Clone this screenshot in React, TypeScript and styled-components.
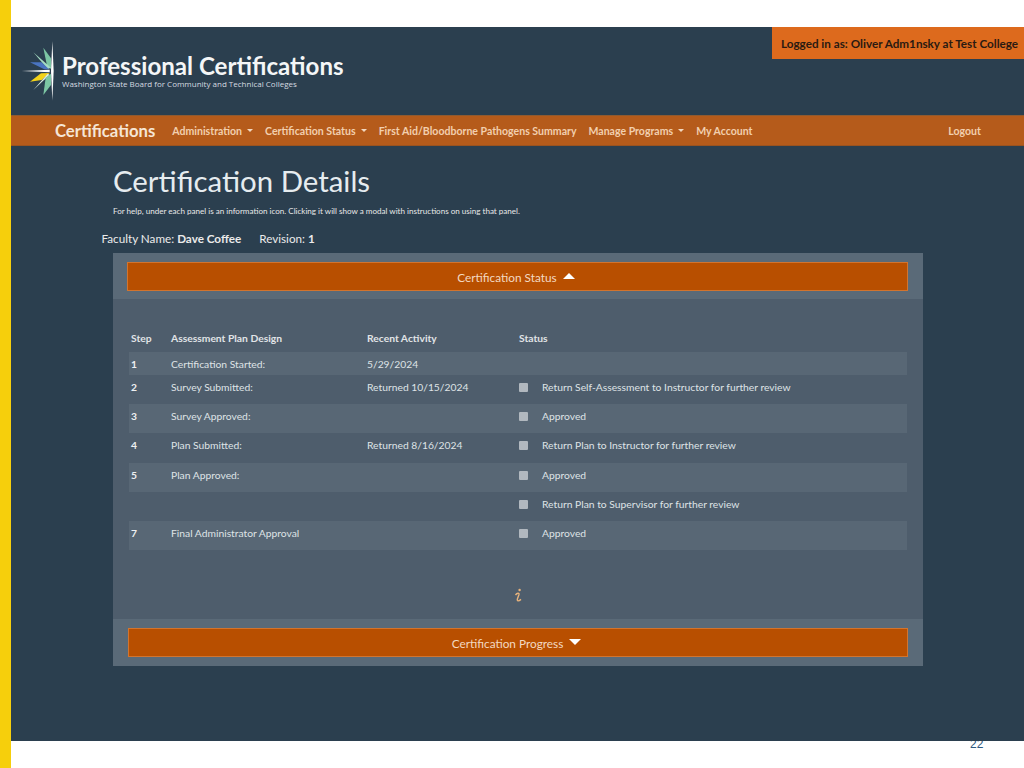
import * as React from 'react';
import styled, { createGlobalStyle } from 'styled-components';

const GlobalStyle = createGlobalStyle`
  html, body {
    margin: 0;
    padding: 0;
    background: #fff;
    font-family: Lato, "Liberation Sans", sans-serif;
  }
`;

/**
 * Styled components
 */
const Page = styled.div`
  display: flex;
  height: 768px;
  overflow: hidden;
  position: relative;
  width: 1024px;
`;

const YellowBar = styled.div`
  background: #f6cf0c;
  flex: 0 0 11px;
`;

const Slide = styled.div`
  background: #2b3f4f;
  color: #ebebeb;
  display: flex;
  flex: 1;
  flex-direction: column;
  height: 714px;
  margin-top: 27px;
  position: relative;
  z-index: 1;
`;

const PageNumber = styled.div`
  color: #2f5a80;
  font-family: "Liberation Sans", sans-serif;
  font-size: 12px;
  left: 970px;
  line-height: 14px;
  position: absolute;
  top: 737px;
`;

const LoginBadge = styled.div`
  align-items: center;
  background: #dd6a1d;
  box-sizing: border-box;
  color: #2a1a12;
  display: flex;
  font-size: 11.7px;
  font-weight: 700;
  height: 32px;
  padding-left: 9px;
  position: absolute;
  right: 0;
  top: 0;
  white-space: nowrap;
  width: 252px;
`;

const Banner = styled.header`
  align-items: center;
  display: flex;
  height: 88px;
  padding-left: 4px;
`;

const LogoMark = styled.svg`
  display: block;
  flex: 0 0 auto;
  height: 72px;
  width: 47px;
`;

const BrandText = styled.div`
  margin-top: 1px;
`;

const BrandTitle = styled.div`
  color: #f4f6f7;
  font-size: 24.1px;
  font-weight: 700;
  line-height: 24px;
  white-space: nowrap;
`;

const BrandSubtitle = styled.div`
  color: #d5dbe0;
  font-family: "Open Sans", sans-serif;
  font-size: 8px;
  line-height: 11px;
  white-space: nowrap;
`;

const NavBar = styled.nav`
  align-items: center;
  background: #b55b1b;
  border-bottom: 1px solid #9a5320;
  border-top: 1px solid #8f5a30;
  box-sizing: border-box;
  display: flex;
  height: 31px;
  padding-left: 44px;
`;

const NavBrand = styled.span`
  color: #f6e6d6;
  font-size: 16.7px;
  font-weight: 700;
  margin-right: 17px;
  white-space: nowrap;
`;

const NavLink = styled.span<{ $right?: boolean }>`
  align-items: center;
  color: #f2cfae;
  display: flex;
  font-size: 10.55px;
  font-weight: 700;
  margin-left: ${(p) => (p.$right ? 'auto' : '0')};
  margin-right: ${(p) => (p.$right ? '43px' : '12px')};
  white-space: nowrap;
`;

const Caret = styled.i`
  border-left: 3px solid transparent;
  border-right: 3px solid transparent;
  border-top: 3px solid #f2d8c0;
  display: block;
  margin-left: 5px;
`;

const Main = styled.main`
  display: flex;
  flex-direction: column;
  padding: 0 101px 0 102px;
`;

const Title = styled.h1`
  color: #e6ecef;
  font-size: 29.4px;
  font-weight: 400;
  line-height: 36px;
  margin: 17px 0 0 0;
  white-space: nowrap;
`;

const HelpText = styled.p`
  color: #e8e8e8;
  font-size: 8.07px;
  line-height: 12px;
  margin: 6px 0 0 0;
  white-space: nowrap;
`;

const FacultyLine = styled.div`
  display: flex;
  font-size: 11.7px;
  gap: 18px;
  line-height: 14px;
  margin: 14px 0 8px -11.5px;

  b {
    font-weight: 700;
  }
`;

const Panel = styled.section`
  background: #4e5d6c;
  display: flex;
  flex-direction: column;
  height: 413px;
`;

const PanelBar = styled.div<{ $footer?: boolean }>`
  background: #5a6a78;
  box-sizing: border-box;
  display: flex;
  flex: 0 0 ${(p) => (p.$footer ? '47px' : '46px')};
  padding: 9px 15px 8px ${(p) => (p.$footer ? '15px' : '14px')};
`;

const BarButton = styled.div`
  align-items: center;
  background: #b84f00;
  border: 1px solid #d2742e;
  box-sizing: border-box;
  color: #f3d9c2;
  display: flex;
  flex: 1;
  font-size: 11.8px;
  gap: 6px;
  height: 29px;
  justify-content: center;
  padding: 1px 3px 0 0;
`;

const Arrow = styled.i<{ $up?: boolean }>`
  border-left: 6px solid transparent;
  border-right: 6px solid transparent;
  ${(p) => (p.$up ? 'border-bottom: 6px solid #fff;' : 'border-top: 6px solid #fff;')}
  display: block;
  margin-bottom: 2px;
`;

const PanelBody = styled.div`
  display: flex;
  flex: 1;
  flex-direction: column;
  padding: 27px 16px 0 16px;
`;

const StepGrid = styled.div<{ $height: number; $striped?: boolean }>`
  align-items: ${(p) => (p.$height > 24 ? 'flex-start' : 'center')};
  background: ${(p) => (p.$striped ? '#586775' : 'transparent')};
  box-sizing: border-box;
  color: #dfe3e6;
  display: grid;
  font-size: 10.3px;
  grid-template-columns: 40px 196px 152px 23px 1fr;
  height: ${(p) => p.$height}px;
  line-height: 14px;
  padding: ${(p) => (p.$height > 24 ? '5px' : '0')} 0 0 2px;
  white-space: nowrap;
`;

const HeadRow = styled(StepGrid)`
  align-items: flex-start;
  padding-top: 5px;
`;

const HeadCell = styled.span`
  color: #e1e4e7;
  font-weight: 700;
`;

const StepNumber = styled.span`
  color: #eef0f2;
  font-weight: 700;
`;

const Check = styled.i`
  background: #b1b8bf;
  border-radius: 1px;
  display: block;
  height: 9px;
  margin-top: 3px;
  width: 9px;
`;

const InfoRow = styled.div`
  display: flex;
  justify-content: center;
  margin-top: 38px;
`;

const InfoGlyph = styled.svg`
  display: block;
  height: 15px;
  width: 9px;
`;

const steps = [
  { step: '1', plan: 'Certification Started:', activity: '5/29/2024', height: 23, striped: true },
  { step: '2', plan: 'Survey Submitted:', activity: 'Returned 10/15/2024', status: 'Return Self-Assessment to Instructor for further review', height: 29 },
  { step: '3', plan: 'Survey Approved:', status: 'Approved', height: 29, striped: true },
  { step: '4', plan: 'Plan Submitted:', activity: 'Returned 8/16/2024', status: 'Return Plan to Instructor for further review', height: 30 },
  { step: '5', plan: 'Plan Approved:', status: 'Approved', height: 29, striped: true },
  { status: 'Return Plan to Supervisor for further review', height: 29 },
  { step: '7', plan: 'Final Administrator Approval', status: 'Approved', height: 29, striped: true }
];

// logo shards, traced from the reference at 3x
const shards = [
  { fill: '#7cc6a4', points: '85,38 108,70 108,102 96,92' },
  { fill: '#a5dcc3', points: '55,52 108,98 98,102' },
  { fill: '#4a74c0', points: '45,82 80,82 102,103 88,103' },
  { fill: '#ffffff', points: '20,108 104,104 104,112' },
  { fill: '#f3d21a', points: '45,140 78,115 104,114 80,135' },
  { fill: '#dfeee4', points: '55,165 98,116 104,119' },
  { fill: '#7cc6a4', points: '85,180 92,128 108,116 108,150' },
  { fill: '#ffffff', points: '112,18 116,108 112,197 108,108' }
];

const Logo = () => (
  <LogoMark viewBox="0 0 141 216">
    {shards.map((shard, i) => (
      <polygon key={i} fill={shard.fill} points={shard.points} />
    ))}
  </LogoMark>
);

const InfoIcon = () => (
  <InfoGlyph viewBox="0 0 9 15">
    <circle cx="5.6" cy="2" r="1.2" fill="#e6b27c" />
    <path
      d="M1.5 7 C3 5 5.5 4.6 5 6.5 L3.4 11 C2.8 13.4 4.6 13.4 7 11.4"
      fill="none"
      stroke="#e6b27c"
      strokeWidth="1.4"
    />
  </InfoGlyph>
);

const App = () => (
  <React.Fragment>
    <GlobalStyle />
    <Page>
      <YellowBar />
      <Slide>
        <LoginBadge>Logged in as: Oliver Adm1nsky at Test College</LoginBadge>
        <Banner>
          <Logo />
          <BrandText>
            <BrandTitle>Professional Certifications</BrandTitle>
            <BrandSubtitle>Washington State Board for Community and Technical Colleges</BrandSubtitle>
          </BrandText>
        </Banner>
        <NavBar>
          <NavBrand>Certifications</NavBrand>
          <NavLink>Administration<Caret /></NavLink>
          <NavLink>Certification Status<Caret /></NavLink>
          <NavLink>First Aid/Bloodborne Pathogens Summary</NavLink>
          <NavLink>Manage Programs<Caret /></NavLink>
          <NavLink>My Account</NavLink>
          <NavLink $right>Logout</NavLink>
        </NavBar>
        <Main>
          <div>
            <Title>Certification Details</Title>
            <HelpText>For help, under each panel is an information icon. Clicking it will show a modal with instructions on using that panel.</HelpText>
          </div>
          <FacultyLine>
            <span>Faculty Name: <b>Dave Coffee</b></span>
            <span>Revision: <b>1</b></span>
          </FacultyLine>
          <Panel>
            <PanelBar>
              <BarButton>Certification Status <Arrow $up /></BarButton>
            </PanelBar>
            <PanelBody>
              <HeadRow $height={26}>
                <HeadCell>Step</HeadCell>
                <HeadCell>Assessment Plan Design</HeadCell>
                <HeadCell>Recent Activity</HeadCell>
                <HeadCell>Status</HeadCell>
                <span />
              </HeadRow>
              {steps.map((row, i) => (
                <StepGrid key={i} $height={row.height} $striped={row.striped}>
                  <StepNumber>{row.step}</StepNumber>
                  <span>{row.plan}</span>
                  <span>{row.activity}</span>
                  {row.status ? <Check /> : <span />}
                  <span>{row.status}</span>
                </StepGrid>
              ))}
              <InfoRow>
                <InfoIcon />
              </InfoRow>
            </PanelBody>
            <PanelBar $footer>
              <BarButton>Certification Progress <Arrow /></BarButton>
            </PanelBar>
          </Panel>
        </Main>
      </Slide>
      <PageNumber>22</PageNumber>
    </Page>
  </React.Fragment>
);

export default App;
